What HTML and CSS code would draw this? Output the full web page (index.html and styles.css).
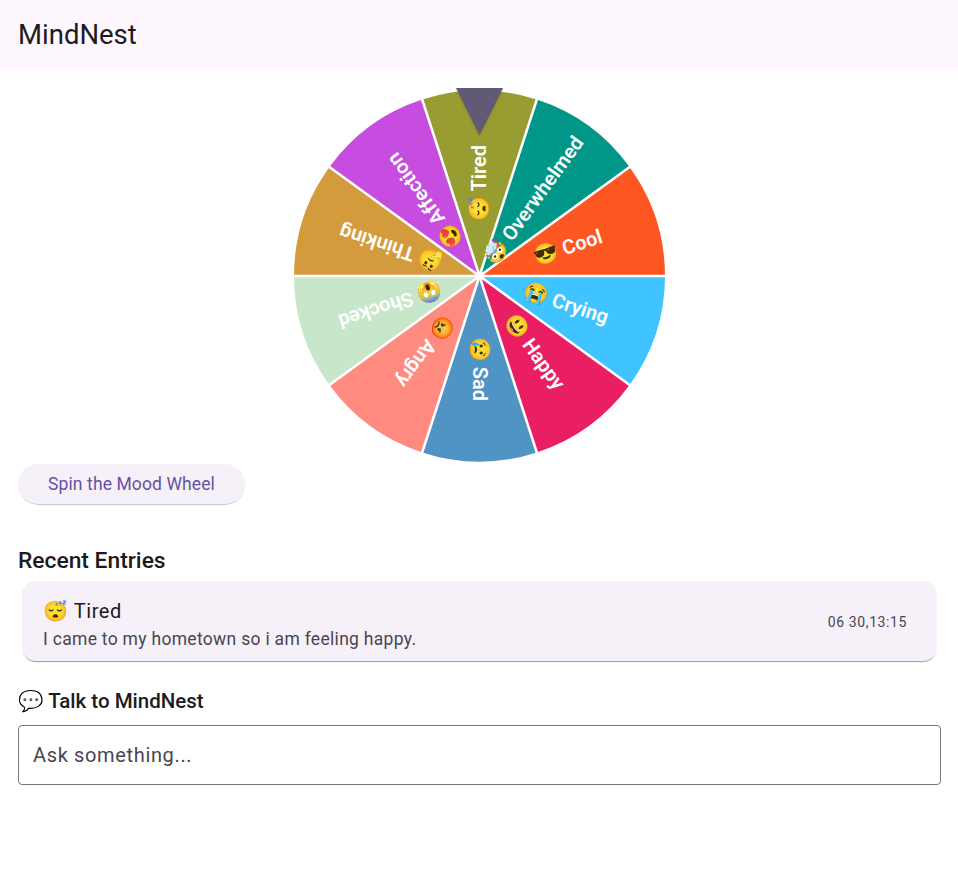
FILE: index.html
```html
<!DOCTYPE html>
<html lang="en">
<head>
<meta charset="utf-8">
<title>MindNest</title>
<link rel="stylesheet" href="styles.css">
</head>
<body>
<header class="appbar"><h1 class="appbar-title">MindNest</h1></header>
<main class="content">
  <div class="wheel-wrap">
    <svg class="wheel" width="372" height="376" viewBox="-186.5 -188 372 376" role="img" aria-label="Mood wheel">
      <g>
        <path fill="#FF5722" d="M0 0L150 -109A185.5 185.5 0 0 1 185.5 0Z"/>
        <path fill="#40C4FF" d="M0 0L185.5 0A185.5 185.5 0 0 1 150 109Z"/>
        <path fill="#E91E63" d="M0 0L150 109A185.5 185.5 0 0 1 57.3 176.4Z"/>
        <path fill="#4F94C4" d="M0 0L57.3 176.4A185.5 185.5 0 0 1 -57.3 176.4Z"/>
        <path fill="#FF8A80" d="M0 0L-57.3 176.4A185.5 185.5 0 0 1 -150 109Z"/>
        <path fill="#C8E6C9" d="M0 0L-150 109A185.5 185.5 0 0 1 -185.5 0Z"/>
        <path fill="#D39B3B" d="M0 0L-185.5 0A185.5 185.5 0 0 1 -150 -109Z"/>
        <path fill="#C64DDF" d="M0 0L-150 -109A185.5 185.5 0 0 1 -57.3 -176.4Z"/>
        <path fill="#979D30" d="M0 0L-57.3 -176.4A185.5 185.5 0 0 1 57.3 -176.4Z"/>
        <path fill="#009688" d="M0 0L57.3 -176.4A185.5 185.5 0 0 1 150 -109Z"/>
      </g>
      <g class="spokes">
        <line x2="186"/><line x2="150.5" y2="109.3"/><line x2="57.5" y2="177"/><line x2="-57.5" y2="177"/><line x2="-150.5" y2="109.3"/>
        <line x2="-186"/><line x2="-150.5" y2="-109.3"/><line x2="-57.5" y2="-177"/><line x2="57.5" y2="-177"/><line x2="150.5" y2="-109.3"/>
      </g>
      <g class="labels" text-anchor="middle">
        <text class="slice-label" transform="rotate(-18) translate(93 6.5)">😎 Cool</text>
        <text class="slice-label" transform="rotate(18) translate(91 6.5)">😭 Crying</text>
        <text class="slice-label" transform="rotate(54) translate(94 6.5)">😃 Happy</text>
        <text class="slice-label" transform="rotate(90) translate(93 6.5)">😢 Sad</text>
        <text class="slice-label" transform="rotate(126) translate(93 6.5)">😡 Angry</text>
        <text class="slice-label" transform="rotate(162) translate(94 6.5)">😱 Shocked</text>
        <text class="slice-label" transform="rotate(198) translate(93 6.5)">🤔 Thinking</text>
        <text class="slice-label" transform="rotate(234) translate(93 6.5)">😍 Affection</text>
        <text class="slice-label" transform="rotate(270) translate(93 6.5)">😴 Tired</text>
        <text class="slice-label" transform="rotate(306) translate(93 6.5)">🤯 Overwhelmed</text>
      </g>
      <polygon class="pointer" points="-23.5,-188 23.5,-188 0,-141"/>
    </svg>
  </div>
  <button class="spin-btn" type="button">Spin the Mood Wheel</button>
  <h2 class="section-title recent-title">Recent Entries</h2>
  <article class="entry">
    <div class="entry-main">
      <div class="entry-mood">😴 Tired</div>
      <div class="entry-note">I came to my hometown so i am feeling happy.</div>
    </div>
    <div class="entry-time">06 30,13:15</div>
  </article>
  <h2 class="section-title talk-title">💬 Talk to MindNest</h2>
  <input class="ask" type="text" placeholder="Ask something...">
</main>
</body>
</html>
```
FILE: styles.css
```css
* { box-sizing: border-box; }
html, body { margin: 0; padding: 0; background: #fff; }
body {
  font-family: Roboto, "Noto Color Emoji", "Noto Sans", sans-serif;
  color: #1d1b20;
}
.appbar {
  height: 69px;
  background: #fef7ff;
  display: flex;
  align-items: center;
  padding: 0 18px;
}
.appbar-title {
  margin: 0;
  font-size: 27.5px;
  font-weight: 400;
  line-height: 1;
}
.content {
  padding: 19px 17px 0 18px;
  display: flex;
  flex-direction: column;
}
.wheel-wrap {
  display: flex;
  justify-content: center;
  margin: 0 -17px 0 -18px;
}
.wheel { display: block; }
.spokes line { stroke: #fff; stroke-width: 2.5; }
.slice-label {
  font-family: Roboto, "Noto Color Emoji", sans-serif;
  font-size: 20px;
  font-weight: 600;
  fill: #fff;
}
.pointer { fill: #615a76; filter: drop-shadow(0 1px 1px rgba(0,0,0,.2)); }
.spin-btn {
  align-self: flex-start;
  width: 227px;
  height: 40px;
  padding: 1px 0 0;
  border: 0;
  border-radius: 20px;
  background: #f6f1f8;
  color: #6750a4;
  font: 400 17.5px/1 Roboto, sans-serif;
  letter-spacing: .1px;
  box-shadow: 0 1.5px 1px -1px rgba(0,0,0,.4);
}
.section-title {
  margin: 0;
  font-size: 22.8px;
  font-weight: 500;
  line-height: 28px;
  color: #1d1b20;
}
.recent-title { margin-top: 43px; }
.entry {
  margin: 6px 4px 0;
  height: 80px;
  width: 915px;
  border-radius: 14px;
  background: #f6f1f8;
  box-shadow: 0 1.5px 1px -1px rgba(0,0,0,.4);
  display: flex;
  align-items: center;
  justify-content: space-between;
  padding: 0 30px 0 21px;
}
.entry-main { padding-top: 4px; }
.entry-mood {
  font-size: 20px;
  line-height: 28px;
  letter-spacing: .6px;
  font-weight: 400;
}
.entry-note {
  font-size: 17.5px;
  line-height: 22px;
  letter-spacing: .3px;
  color: #49454f;
  margin-top: 3px;
}
.entry-time {
  padding-top: 2px;
  font-size: 14px;
  letter-spacing: .6px;
  color: #49454f;
}
.talk-title { margin-top: 26px; font-size: 20.5px; }
.ask {
  margin-top: 10px;
  width: 923px;
  height: 60px;
  border: 1px solid #79747e;
  border-radius: 4px;
  padding: 0 14px;
  font: 400 20px Roboto, sans-serif;
  letter-spacing: .65px;
  color: #49454f;
  background: #fff;
  outline: 0;
}
.ask::placeholder { color: #49454f; opacity: 1; }
```
